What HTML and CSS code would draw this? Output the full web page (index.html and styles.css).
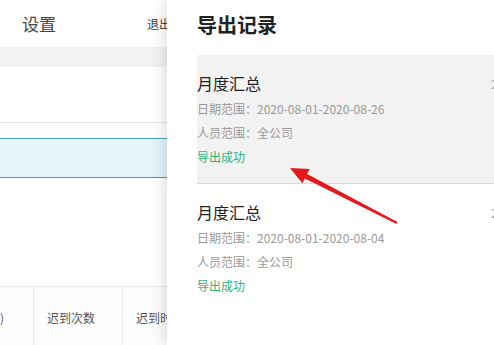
FILE: index.html
```html
<!DOCTYPE html>
<html lang="zh-CN">
<head>
<meta charset="utf-8">
<link rel="stylesheet" href="styles.css">
</head>
<body>
<div class="page">
  <header class="topbar">
    <span class="topbar-title">设置</span>
    <span class="topbar-exit">退出</span>
  </header>
  <div class="band"></div>
  <div class="section">
    <div class="section-body"></div>
    <div class="row-selected"></div>
    <div class="spacer"></div>
    <div class="thead">
      <div class="th th-a">)</div>
      <div class="th th-b">迟到次数</div>
      <div class="th th-c">迟到时长</div>
    </div>
  </div>
</div>

<aside class="drawer">
  <h1 class="drawer-title">导出记录</h1>
  <div class="record record-active">
    <div class="record-head">
      <span class="record-name">月度汇总</span>
      <span class="record-time">2020-08-26 10:30</span>
    </div>
    <div class="record-line">日期范围：2020-08-01-2020-08-26</div>
    <div class="record-line">人员范围：全公司</div>
    <div class="record-line record-ok">导出成功</div>
  </div>
  <div class="record record-last">
    <div class="record-head">
      <span class="record-name">月度汇总</span>
      <span class="record-time">2020-08-04 09:12</span>
    </div>
    <div class="record-line">日期范围：2020-08-01-2020-08-04</div>
    <div class="record-line">人员范围：全公司</div>
    <div class="record-line record-ok">导出成功</div>
  </div>
</aside>

<svg class="arrow" width="494" height="345" viewBox="0 0 494 345">
  <polygon fill="#e3191b" points="290,168 309.7,169.1 307.1,174 397.5,221.9 396.5,224.1 304.9,178.4 302.3,183.3"/>
</svg>
</body>
</html>
```

FILE: styles.css
```css
html, body {
  margin: 0;
  padding: 0;
  width: 494px;
  height: 345px;
  overflow: hidden;
  background: #fff;
  font-family: "Noto Sans CJK SC", "Noto Sans", sans-serif;
}

.page {
  width: 494px;
  height: 345px;
  display: flex;
  flex-direction: column;
}

.topbar {
  height: 47px;
  display: flex;
  align-items: center;
  padding-left: 22px;
  background: #fff;
}

.topbar-title {
  font-size: 17px;
  color: #444;
  width: 125px;
}

.topbar-exit {
  font-size: 12px;
  color: #444;
}

.band {
  height: 20px;
  background: #f2f2f2;
}

.section {
  display: flex;
  flex-direction: column;
  flex: 1;
}

.section-body {
  height: 55px;
  border-bottom: 1px solid #e6e6e6;
}

.row-selected {
  margin-top: 15px;
  height: 38px;
  background: #e3f4fb;
  border-top: 1px solid #4aa1b3;
  border-bottom: 1px solid #4aa1b3;
}

.spacer {
  height: 108px;
  border-bottom: 1px solid #e8e8e8;
}

.thead {
  display: flex;
  flex: 1;
  background: #fdfdfd;
}

.th {
  font-size: 12px;
  color: #555;
  display: flex;
  align-items: center;
  padding-top: 2px;
  border-right: 1px solid #e8e8e8;
  white-space: nowrap;
  overflow: hidden;
}

.th-a { width: 33px; }
.th-b { width: 75px; padding-left: 13px; }
.th-c { width: 120px; padding-left: 13px; }

.drawer {
  position: absolute;
  top: 0;
  left: 167px;
  width: 327px;
  height: 345px;
  background: #fff;
  box-shadow: -4px 0 12px rgba(0, 0, 0, 0.12);
  padding-left: 30px;
  box-sizing: border-box;
  overflow: hidden;
}

.drawer-title {
  margin: 0;
  height: 55px;
  font-size: 20px;
  font-weight: 700;
  line-height: 50px;
  color: #222;
}

.record {
  width: 400px;
  padding: 16px 0 14px 0;
  border-bottom: 1px solid #e2e2e2;
}

.record-active {
  background: #f2f2f2;
  border-bottom-color: #d9d9d9;
}

.record-last {
  border-bottom: none;
}

.record-head {
  display: grid;
  grid-template-columns: 294px auto;
  align-items: center;
  height: 24px;
  margin-bottom: 2px;
}

.record-name {
  font-size: 16px;
  color: #222;
}

.record-time {
  font-size: 12px;
  color: #aaa;
  white-space: nowrap;
}

.record-line {
  font-size: 12px;
  line-height: 24px;
  color: #999;
  white-space: nowrap;
}

.record-ok {
  color: #2eb37a;
}

.arrow {
  position: absolute;
  top: 0;
  left: 0;
  pointer-events: none;
}
```
